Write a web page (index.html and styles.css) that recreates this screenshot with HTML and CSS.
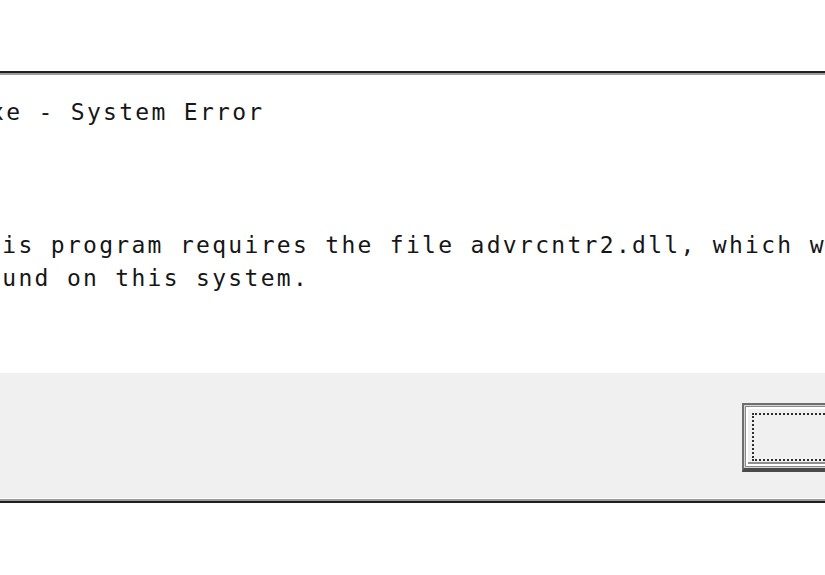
FILE: index.html
```html
<!DOCTYPE html>
<html>
<head>
<meta charset="utf-8">
<link rel="stylesheet" href="styles.css">
</head>
<body>
<div class="page">
  <div class="dialog">
    <div class="content">
      <div class="title">xe - System Error</div>
      <div class="message">This program requires the file advrcntr2.dll, which was not<br>found on this system.</div>
    </div>
    <div class="footer">
      <div class="btn"><div class="focus">OK</div></div>
    </div>
  </div>
</div>
</body>
</html>
```
FILE: styles.css
```css
html, body {
  margin: 0;
  padding: 0;
  background: #ffffff;
  overflow: hidden;
}
body {
  width: 825px;
  height: 575px;
  font-family: "DejaVu Sans Mono", "Liberation Mono", monospace;
  color: #161616;
}
.page {
  padding-top: 71px;
}
.dialog {
  border-top: 2px solid #1e1e1e;
  border-bottom: 2px solid #1e1e1e;
  padding-bottom: 3px;
  box-shadow: inset 0 2px 0 #9c9c9c, inset 0 -2px 0 #9c9c9c;
}
.content {
  padding-top: 23px;
  height: 300px;
  box-sizing: border-box;
  white-space: nowrap;
}
.title {
  font-size: 23px;
  letter-spacing: 2.3px;
  line-height: 33px;
  margin-left: -10px;
}
.message {
  font-size: 23px;
  letter-spacing: 2.3px;
  line-height: 33px;
  margin-left: -30px;
  margin-top: 100px;
}
.footer {
  background: #f0f0f0;
  height: 125px;
  padding-top: 30px;
  padding-left: 742px;
  box-sizing: border-box;
  overflow: hidden;
}
.btn {
  width: 120px;
  height: 69px;
  box-sizing: border-box;
  border: 2px solid #6e6e6e;
  border-bottom: 4px solid #4a4a4a;
  background: #f0f0f0;
  box-shadow: inset 0 0 0 1px #d4d4d4, inset 0 0 0 2px #8a8a8a, inset 0 0 0 4px #ffffff, inset 0 -6px 0 #8e8e8e;
  padding: 8px;
  padding-bottom: 7px;
}
.focus {
  height: 100%;
  box-sizing: border-box;
  border: 2px dotted #2e2e2e;
  color: transparent;
  font-size: 1px;
}
```
